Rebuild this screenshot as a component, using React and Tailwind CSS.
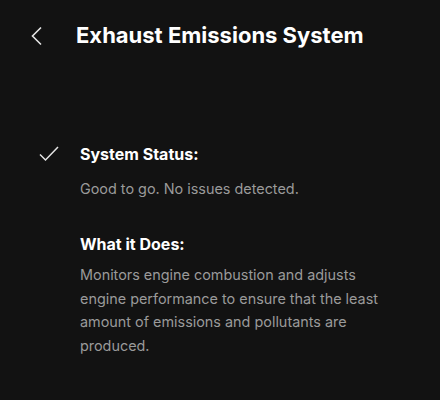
import React from "react";

export default function App() {
  return (
    <div className="w-[440px] h-[400px] bg-[#121212] text-white overflow-hidden" style={{ fontFamily: "Inter, 'Noto Sans', sans-serif" }}>
      <div className="flex items-center h-[71px] pl-[30px]">
        <svg width="14" height="20" viewBox="0 0 14 20" className="mr-[32px]">
          <path d="M11 1.5 L2.5 10 L11 18.5" fill="none" stroke="#e5e5e5" strokeWidth="1.6" />
        </svg>
        <h1 className="text-[22px] font-bold tracking-[0px]">Exhaust Emissions System</h1>
      </div>
      <div className="pt-[72px] pl-[38px] flex">
        <svg width="22" height="18" viewBox="0 0 22 18" className="mt-[2px] mr-[20px] shrink-0">
          <path d="M2 9.5 L7.5 15 L20 2" fill="none" stroke="#e5e5e5" strokeWidth="1.5" />
        </svg>
        <div className="flex flex-col w-[310px]">
          <div className="text-[16px] font-bold leading-[22px]">System Status:</div>
          <div className="text-[14.4px] text-[#9a9a9a] leading-[22px] mt-[13px]">Good to go. No issues detected.</div>
          <div className="text-[16px] font-bold leading-[22px] mt-[33px]">What it Does:</div>
          <div className="text-[14.4px] text-[#9a9a9a] leading-[23.7px] mt-[8px]">
            Monitors engine combustion and adjusts engine performance to ensure that the least amount of emissions and pollutants are produced.
          </div>
        </div>
      </div>
    </div>
  );
}
